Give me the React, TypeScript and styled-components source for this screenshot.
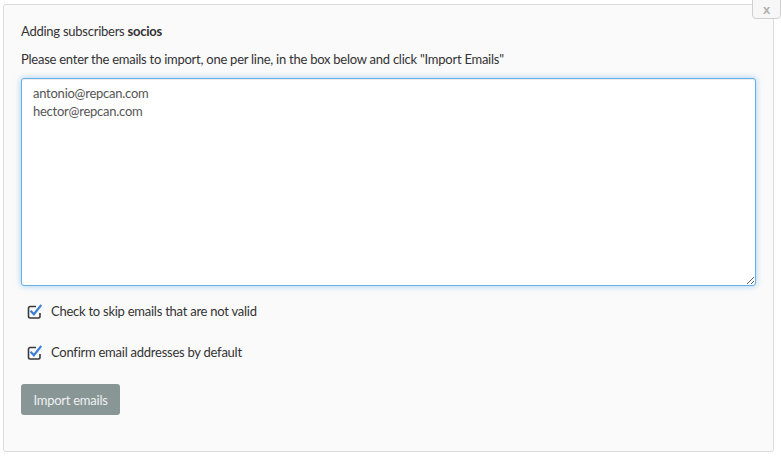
import React from "react";
import styled, { createGlobalStyle } from "styled-components";

const Global = createGlobalStyle`
  html, body { margin: 0; padding: 0; background: #ffffff; }
  body { font-family: Lato, "Noto Sans", sans-serif; font-size: 13px; letter-spacing: -0.25px; color: #333; }
  * { box-sizing: border-box; }
`;

const Page = styled.div`
  padding: 4px 8px 10px 3px;
  width: 781px;
  height: 461px;
`;

const Panel = styled.div`
  position: relative;
  background: #fafafa;
  border: 1px solid #dcdcdc;
  border-radius: 3px;
  width: 771px;
  height: 448px;
  padding: 17px 17px 0 17px;
  display: flex;
  flex-direction: column;
`;

const Close = styled.button`
  position: absolute;
  top: -10px;
  right: -8px;
  width: 29px;
  height: 24px;
  border: 1px solid #cfcfcf;
  border-radius: 4px;
  background: #f7f7f7;
  color: #b0b0b0;
  font: 700 13px "Liberation Sans", sans-serif;
  padding: 6px 0 0;
  line-height: 14px;
`;

const Title = styled.div`
  line-height: 18px;
  margin-bottom: 10px;
  b { font-weight: 700; }
`;

const Hint = styled.div`
  line-height: 18px;
  margin-bottom: 10px;
`;

const Area = styled.textarea`
  width: 735px;
  height: 208px;
  border: 1px solid #66afe9;
  border-radius: 3px;
  box-shadow: inset 0 1px 1px rgba(0,0,0,.075), 0 0 6px rgba(102,175,233,.6);
  background: #fff;
  color: #555;
  font: 13px Lato, "Noto Sans", sans-serif;
  letter-spacing: -0.25px;
  line-height: 18px;
  padding: 5px 11px;
  outline: none;
  resize: both;
  margin: 0;
`;

const CheckRow = styled.label`
  display: flex;
  align-items: center;
  gap: 9px;
  padding-left: 6px;
  line-height: 18px;
  margin-top: ${(p: { $top: number }) => p.$top}px;
`;

const Button = styled.button`
  align-self: flex-start;
  margin-top: 23px;
  width: 99px;
  height: 31px;
  background: #899696;
  color: #eef1f1;
  border: none;
  border-radius: 3px;
  font: 13px Lato, "Noto Sans", sans-serif;
  letter-spacing: -0.25px;
`;

const CheckIcon = () => (
  <svg width="15" height="15" viewBox="0 0 15 15">
    <path d="M9 2.5H3.2A1.7 1.7 0 0 0 1.5 4.2v8.1a1.7 1.7 0 0 0 1.7 1.7h8.1a1.7 1.7 0 0 0 1.7-1.7V9" fill="none" stroke="#3a3a3a" strokeWidth="1.6" />
    <path d="M4.3 7.6l2.6 2.7L13.6 1.8" fill="none" stroke="#3b82d6" strokeWidth="2.2" strokeLinecap="square" />
  </svg>
);

export default function App() {
  return (
    <Page>
      <Global />
      <Panel>
        <Close>x</Close>
        <Title>Adding subscribers <b>socios</b></Title>
        <Hint>Please enter the emails to import, one per line, in the box below and click "Import Emails"</Hint>
        <Area defaultValue={"antonio@repcan.com\nhector@repcan.com"} />
        <CheckRow $top={16}><CheckIcon />Check to skip emails that are not valid</CheckRow>
        <CheckRow $top={23}><CheckIcon />Confirm email addresses by default</CheckRow>
        <Button>Import emails</Button>
      </Panel>
    </Page>
  );
}
